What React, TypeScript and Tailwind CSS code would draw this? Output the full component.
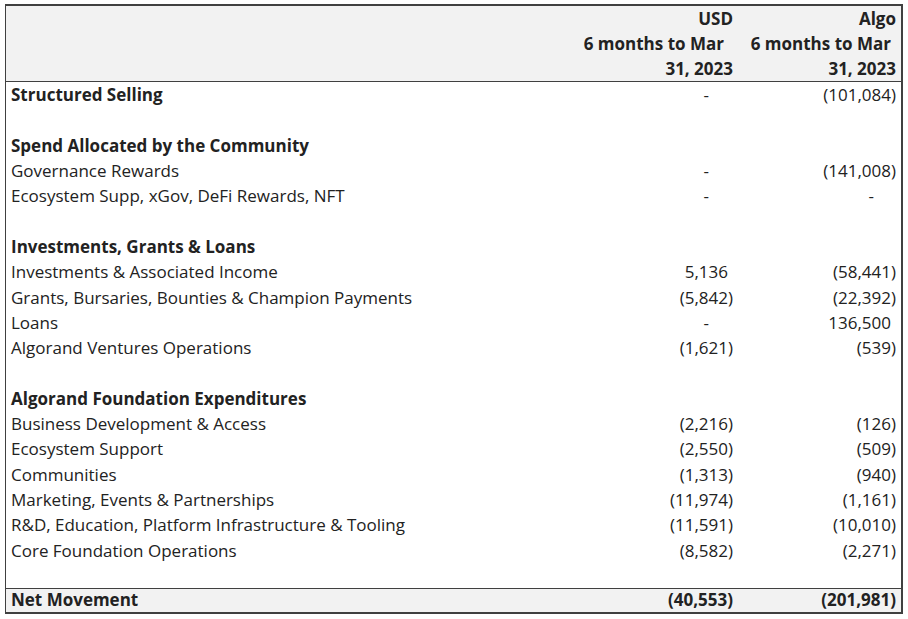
import React from 'react';

type Row =
  | { kind: 'blank' }
  | { kind: 'section'; label: string; usd?: string; algo?: string }
  | { kind: 'item'; label: string; usd: string; algo: string };

const rows: Row[] = [
  { kind: 'section', label: 'Structured Selling', usd: '-', algo: '(101,084)' },
  { kind: 'blank' },
  { kind: 'section', label: 'Spend Allocated by the Community' },
  { kind: 'item', label: 'Governance Rewards', usd: '-', algo: '(141,008)' },
  { kind: 'item', label: 'Ecosystem Supp, xGov, DeFi Rewards, NFT', usd: '-', algo: '-' },
  { kind: 'blank' },
  { kind: 'section', label: 'Investments, Grants & Loans' },
  { kind: 'item', label: 'Investments & Associated Income', usd: '5,136', algo: '(58,441)' },
  { kind: 'item', label: 'Grants, Bursaries, Bounties & Champion Payments', usd: '(5,842)', algo: '(22,392)' },
  { kind: 'item', label: 'Loans', usd: '-', algo: '136,500' },
  { kind: 'item', label: 'Algorand Ventures Operations', usd: '(1,621)', algo: '(539)' },
  { kind: 'blank' },
  { kind: 'section', label: 'Algorand Foundation Expenditures' },
  { kind: 'item', label: 'Business Development & Access', usd: '(2,216)', algo: '(126)' },
  { kind: 'item', label: 'Ecosystem Support', usd: '(2,550)', algo: '(509)' },
  { kind: 'item', label: 'Communities', usd: '(1,313)', algo: '(940)' },
  { kind: 'item', label: 'Marketing, Events & Partnerships', usd: '(11,974)', algo: '(1,161)' },
  { kind: 'item', label: 'R&D, Education, Platform Infrastructure & Tooling', usd: '(11,591)', algo: '(10,010)' },
  { kind: 'item', label: 'Core Foundation Operations', usd: '(8,582)', algo: '(2,271)' },
  { kind: 'blank' },
];

// accounting style: dash sits left of the edge, positives leave room for ")"
function Amount({ value, dashGap }: { value?: string; dashGap: string }) {
  if (!value) return null;
  if (value === '-') return <span className={dashGap}>-</span>;
  if (value.startsWith('(')) return <span>{value}</span>;
  return (
    <span>
      {value}
      <span className="invisible">)</span>
    </span>
  );
}

export default function App() {
  return (
    <div className="min-h-screen bg-white pt-[4px] pl-[5px] font-['Open_Sans',sans-serif] text-[17px] leading-none text-[#222222]">
      <div className="w-[898px] border-t-2 border-r-2 border-b-2 border-l border-[#404040]">
        {/* Header */}
        <div className="grid grid-cols-[1fr_170px_167px] bg-[#f2f2f2] font-bold border-b border-[#404040]">
          <div />
          <div className="flex flex-col items-end pr-[1px]">
            <div className="flex h-[25px] items-end pb-[4px]">USD</div>
            <div className="flex h-[25px] items-end pb-[4px] pr-[9px]">6 months to Mar</div>
            <div className="flex h-[25px] items-end pb-[4px]">31, 2023</div>
          </div>
          <div className="flex flex-col items-end pr-[5px]">
            <div className="flex h-[25px] items-end pb-[4px]">Algo</div>
            <div className="flex h-[25px] items-end pb-[4px] pr-[5px]">6 months to Mar</div>
            <div className="flex h-[25px] items-end pb-[4px]">31, 2023</div>
          </div>
        </div>

        {/* Body */}
        {rows.map((row, i) =>
          row.kind === 'blank' ? (
            <div key={i} className="h-[25.3px]" />
          ) : (
            <div key={i} className="grid h-[25.3px] grid-cols-[1fr_170px_167px] items-end pb-[4px]">
              <div className={row.kind === 'section' ? 'pl-[5px] font-bold' : 'pl-[5px]'}>{row.label}</div>
              <div className="flex justify-end pr-[1px]">
                <Amount value={row.usd} dashGap="mr-[24px]" />
              </div>
              <div className="flex justify-end pr-[5px]">
                <Amount value={row.algo} dashGap="mr-[22px]" />
              </div>
            </div>
          )
        )}

        {/* Net movement */}
        <div className="grid h-[24px] grid-cols-[1fr_170px_167px] items-end border-t border-[#404040] bg-[#f2f2f2] pb-[4px] font-bold">
          <div className="pl-[5px]">Net Movement</div>
          <div className="flex justify-end pr-[1px]">(40,553)</div>
          <div className="flex justify-end pr-[5px]">(201,981)</div>
        </div>
      </div>
    </div>
  );
}
